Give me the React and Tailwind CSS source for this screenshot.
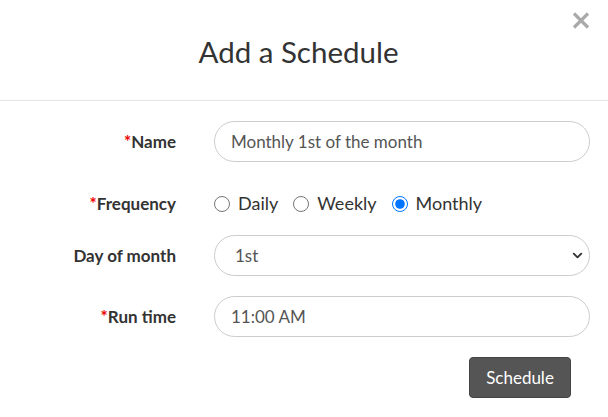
import { ChevronDown } from "lucide-react";

const Label = ({ children, required }) => (
  <div className="w-[176px] shrink-0 text-right font-bold text-[17px] text-[#333]">
    {required && <span className="text-[#e00] font-bold">*</span>}
    {children}
  </div>
);

const Radio = ({ label, checked }) => (
  <label className="flex items-center gap-[8px] mr-[15px]">
    <input
      type="radio"
      name="freq"
      defaultChecked={checked}
      className="w-[16px] h-[16px] m-0 accent-[#0075ff]"
    />
    <span>{label}</span>
  </label>
);

const App = () => {
  return (
    <div className="w-[608px] h-[417px] bg-white relative font-['Lato',sans-serif] text-[#333] overflow-hidden">
      <button className="absolute right-[18px] top-[12px] text-[#aaa]">
        <svg width="18" height="17" viewBox="0 0 18 17">
          <path d="M2 1.5 L16 15.5 M16 1.5 L2 15.5" stroke="currentColor" strokeWidth="3.2" />
        </svg>
      </button>

      <div className="h-[101px] border-b border-[#e5e5e5] flex items-center justify-center">
        <h1 className="text-[29.5px] text-[#333] pt-[4px] pr-[11px]">Add a Schedule</h1>
      </div>

      <div className="pr-[18px] pt-[20px]">
        <div className="flex items-center h-[41px]">
          <Label required>Name</Label>
          <input
            className="ml-[38px] flex-1 h-[41px] rounded-full border border-[#ccc] px-[16px] text-[17px] text-[#555] outline-none"
            defaultValue="Monthly 1st of the month"
          />
        </div>

        <div className="flex items-center h-[41px] mt-[21px] text-[18px]">
          <Label required>Frequency</Label>
          <div className="ml-[38px] flex items-center">
            <Radio label="Daily" />
            <Radio label="Weekly" />
            <Radio label="Monthly" checked />
          </div>
        </div>

        <div className="flex items-center h-[41px] mt-[11px]">
          <Label>Day of month</Label>
          <div className="ml-[38px] flex-1 relative">
            <select className="w-full h-[41px] appearance-none rounded-full border border-[#ccc] px-[20px] text-[17px] text-[#555] bg-white outline-none">
              <option>1st</option>
            </select>
            <ChevronDown
              size={15}
              strokeWidth={3}
              className="absolute right-[5px] top-[13px] text-[#333] pointer-events-none"
            />
          </div>
        </div>

        <div className="flex items-center h-[41px] mt-[20px]">
          <Label required>Run time</Label>
          <input
            className="ml-[38px] flex-1 h-[41px] rounded-full border border-[#ccc] px-[16px] text-[17px] text-[#555] outline-none"
            defaultValue="11:00 AM"
          />
        </div>

        <div className="flex justify-end mt-[20px] pr-[19px]">
          <button className="w-[102px] h-[41px] rounded-[4px] bg-[#555] border border-[#444] text-white text-[17px]">
            Schedule
          </button>
        </div>
      </div>
    </div>
  );
};

export default App;
